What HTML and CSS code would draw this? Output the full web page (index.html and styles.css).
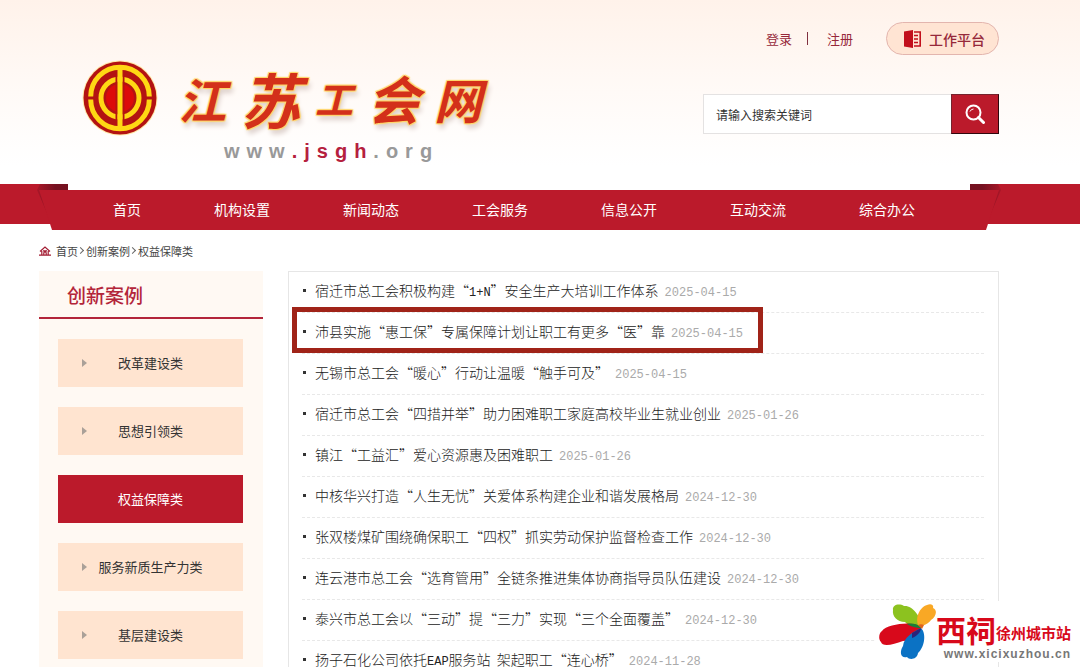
FILE: index.html
```html
<!DOCTYPE html>
<html lang="zh-CN">
<head>
<meta charset="utf-8">
<meta name="viewport" content="width=device-width, initial-scale=1">
<title>江苏工会网 - 权益保障类</title>
<link rel="stylesheet" href="styles.css">
</head>
<body>
<header class="header">
  <div class="wrap header-inner">
    <div class="brand">
      <svg class="emblem" viewBox="0 0 76 76" aria-hidden="true">
        <circle cx="38" cy="38" r="37.5" fill="#ffe9a8"/>
        <circle cx="38" cy="38" r="36.500" fill="#b31312"/>
        <g fill="none" stroke="#ffd814" stroke-width="5">
          <path d="M8.700 36.500A29.300 29.300 0 0 1 67.300 36.500M8.700 39.500A29.300 29.300 0 0 0 67.300 39.500"/>
          <circle cx="38" cy="38" r="19"/>
        </g>
        <circle cx="38" cy="38" r="14" fill="#dc0a0a"/>
        <path d="M34.500 11.500v53M41.500 11.500v53" stroke="#b31312" stroke-width="2"/>
        <path d="M38 7v62" stroke="#ffd814" stroke-width="5"/>
      </svg>
      <div class="brand-text">
        <h1 class="brand-name"><span>江</span><span class="big">苏</span><span class="small">工</span><span class="mid">会</span><span>网</span></h1>
        <p class="brand-url">www<b>.jsgh</b>.org</p>
      </div>
    </div>
    <div class="tools">
      <div class="account">
        <a href="#">登录</a><span class="bar"></span><a href="#">注册</a>
        <a class="platform" href="#">
          <svg class="door" viewBox="0 0 18 18" aria-hidden="true"><path fill="#c20f1c" d="M0 1.500L9 0v18L0 16.500z"/><path fill="none" stroke="#c20f1c" stroke-width="1.600" d="M10 2h6.200v14H10M10 5.500h4M10 9h4M10 12.500h4"/></svg>
          工作平台
        </a>
      </div>
      <form class="search">
        <input type="text" placeholder="请输入搜索关键词" aria-label="请输入搜索关键词">
        <button type="button" aria-label="搜索"><svg viewBox="0 0 20 20" aria-hidden="true"><circle cx="8.500" cy="8.500" r="7" fill="none" stroke="#fff" stroke-width="2"/><path d="M13.500 13.500l5 5" stroke="#fff" stroke-width="3" stroke-linecap="round"/><path d="M5 7.500a4 4 0 0 1 3.500-2.500" fill="none" stroke="#fff" stroke-width="1"/></svg></button>
      </form>
    </div>
  </div>
</header>
<div class="band">
  <div class="wrap">
    <div class="ribbon">
      <nav class="menu">
        <a href="#">首页</a><a href="#">机构设置</a><a href="#">新闻动态</a><a href="#">工会服务</a><a href="#">信息公开</a><a href="#">互动交流</a><a href="#">综合办公</a>
      </nav>
    </div>
  </div>
</div>
<div class="wrap crumbs">
  <svg class="home" viewBox="0 0 12 10" aria-hidden="true"><path fill="none" stroke="#a31d33" stroke-width="1.200" d="M1 5.500L6 1l5 4.500M2.800 5v4M9.200 5v4M0 9.200h12M4.800 9V7a1.200 1.200 0 0 1 2.400 0V9M4 4.800h4"/></svg>
  <a href="#">首页</a><span class="sep"></span><a href="#">创新案例</a><span class="sep"></span><a href="#">权益保障类</a>
</div>
<main class="wrap main">
  <aside class="side">
    <h2>创新案例</h2>
    <ul>
      <li><a href="#">改革建设类</a></li>
      <li><a href="#">思想引领类</a></li>
      <li><a class="active" href="#">权益保障类</a></li>
      <li><a href="#">服务新质生产力类</a></li>
      <li><a href="#">基层建设类</a></li>
    </ul>
  </aside>
  <section class="panel">
    <ul class="news">
      <li><a href="#">宿迁市总工会积极构建“<span class="half">1+N</span>”安全生产大培训工作体系</a><time>2025-04-15</time></li>
      <li class="marked"><a href="#">沛县实施“惠工保”专属保障计划让职工有更多“医”靠</a><time>2025-04-15</time></li>
      <li><a href="#">无锡市总工会“暖心”行动让温暖“触手可及”</a><time>2025-04-15</time></li>
      <li><a href="#">宿迁市总工会“四措并举”助力困难职工家庭高校毕业生就业创业</a><time>2025-01-26</time></li>
      <li><a href="#">镇江“工益汇”爱心资源惠及困难职工</a><time>2025-01-26</time></li>
      <li><a href="#">中核华兴打造“人生无忧”关爱体系构建企业和谐发展格局</a><time>2024-12-30</time></li>
      <li><a href="#">张双楼煤矿围绕确保职工“四权”抓实劳动保护监督检查工作</a><time>2024-12-30</time></li>
      <li><a href="#">连云港市总工会“选育管用”全链条推进集体协商指导员队伍建设</a><time>2024-12-30</time></li>
      <li><a href="#">泰兴市总工会以“三动”提“三力”实现“三个全面覆盖”</a><time>2024-12-30</time></li>
      <li><a href="#">扬子石化公司依托<span class="half">EAP</span>服务站&nbsp; 架起职工“连心桥”</a><time>2024-11-28</time></li>
    </ul>
  </section>
</main>
<div class="stamp">
  <svg class="petals" viewBox="0 0 58 57" aria-hidden="true">
    <path fill="#8cc21f" d="M14 7C13 2 20 0 25 3C33 2 42 13 43 25C36 25 30 23 26 19C18 19 13 13 14 7z"/>
    <path fill="#f9a825" d="M39 22C36 14 41 4 48 2C52 0 55 2 54 5C59 7 57 14 52 17C49 21 43 24 39 22z"/>
    <path fill="#d8091b" d="M3 28C8 21 33 18 40 23C45 30 33 38 24 38C14 42 3 44 2 39C-1 36 0 30 3 28z"/>
    <path fill="#0b72c4" d="M42 25C48 31 45 45 39 50C38 57 30 57 28 54C22 56 20 49 24 43C25 34 34 29 42 25z"/>
    <path fill="#17803a" d="M28 21C33 20 38 21 40 23L43 25C36 25 31 23 28 21z"/>
    <path fill="#2d2379" d="M33 30L42 25C42 29 38 33 33 35z"/>
    <path fill="#df641d" d="M39 22C41 21 43 21 45 22L43 26z"/>
  </svg>
  <div class="stamp-text">
    <p class="stamp-name"><b>西祠</b><span>徐州城市站</span></p>
    <p class="stamp-url">www.xicixuzhou.cn</p>
  </div>
</div>
</body>
</html>
```

FILE: styles.css
```css
*, *::before, *::after { box-sizing: border-box; }
body, h1, h2, p, ul { margin: 0; padding: 0; }
ul { list-style: none; }
a { color: inherit; text-decoration: none; }
body {
  font-family: "Noto Sans CJK SC", sans-serif;
  font-size: 14px;
  color: #333;
  background: #fff;
}
.wrap { padding: 0 81px 0 39px; }

.header { background: linear-gradient(#fff2ea, #fffaf7 50%, #fff 90%); }
.header-inner { display: flex; justify-content: space-between; min-height: 184px; }
.brand { display: flex; gap: 20px; padding: 60px 0 0 43px; }
.emblem { width: 76px; height: 76px; flex: none; }
.brand-text { width: 304px; }
.brand-name {
  display: flex;
  justify-content: space-between;
  align-items: center;
  height: 76px;
  font-size: 48px;
  line-height: 76px;
  font-weight: 700;
  font-style: italic;
  color: #d3301a;
  text-shadow: 1px 1px 1px #ffd56a, -1px -1px 1px #ffd56a, 1px -1px 1px #ffd56a, -1px 1px 1px #ffd56a, 2px 5px 5px #dccfca;
}
.brand-name .big { font-size: 60px; }
.brand-name .mid { font-size: 52px; }
.brand-name .small { font-size: 38px; }
.brand-url {
  padding-left: 46px;
  font: bold 20px/30px "Liberation Sans", sans-serif;
  letter-spacing: 7px;
  color: #999;
  white-space: nowrap;
}
.brand-url b { color: #b5203d; }

.tools { width: 296px; padding-top: 22px; }
.account { display: flex; align-items: center; justify-content: flex-end; font-size: 13px; color: #96283a; }
.bar { width: 1px; height: 13px; margin: 0 19px 0 15px; background: #803040; }
.platform {
  display: flex;
  align-items: center;
  gap: 7px;
  height: 33px;
  margin-left: 33px;
  padding: 0 13px 0 17px;
  border: 1px solid #e3b5ae;
  border-radius: 17px;
  background: #ffe4d3;
  font-size: 14px;
  font-weight: 500;
}
.door { width: 18px; height: 18px; }
.search { display: flex; height: 40px; margin-top: 39px; }
.search input {
  flex: 1;
  min-width: 0;
  padding: 0 12px;
  border: 1px solid #e4e2e2;
  border-right: 0;
  background: #fff;
  font: 12px "Noto Sans CJK SC", sans-serif;
}
.search input::placeholder { color: #333; opacity: 1; }
.search button {
  display: flex;
  align-items: center;
  justify-content: center;
  width: 48px;
  padding: 0;
  border: 1px solid;
  border-color: #76232d #30060c #30060c #76232d;
  background: #bb1a2b;
}
.search svg { width: 20px; height: 20px; }

.band { height: 40px; background: #bb1a2b; }
.ribbon {
  position: relative;
  padding-top: 6px;
  background: linear-gradient(#fff, #fff) center top / calc(100% - 58px) 6px no-repeat;
}
.ribbon::before, .ribbon::after {
  content: "";
  position: absolute;
  top: 0;
  width: 31px;
  height: 38px;
  background: linear-gradient(to right, #a81728, #751120 60%);
  clip-path: polygon(3px 0, 100% 0, 100% 6px, 14px 38px, 0 6px);
}
.ribbon::before { left: -2px; }
.ribbon::after { right: -2px; transform: scaleX(-1); }
.menu {
  position: relative;
  z-index: 1;
  display: flex;
  gap: 73px;
  padding: 0 74px;
  line-height: 39px;
  height: 40px;
  white-space: nowrap;
  color: #fff;
  background: #bb1a2b;
  clip-path: polygon(0 0, 100% 0, calc(100% - 13px) 100%, 13px 100%);
}

.crumbs { display: flex; align-items: center; height: 47px; padding-top: 6px; font-size: 11px; color: #444; }
.home { width: 12px; height: 10px; margin-right: 5px; }
.sep { width: 5px; height: 5px; margin: 0 3px 0 0; border: solid #666; border-width: 1px 1px 0 0; transform: rotate(45deg); }

.main { display: flex; gap: 25px; }
.side { width: 224px; flex: none; background: #fff9f3; }
.side h2 {
  height: 48px;
  padding-left: 28px;
  border-bottom: 2px solid #b3253a;
  font-size: 19px;
  line-height: 48px;
  font-weight: 500;
  color: #b3253a;
}
.side ul { display: flex; flex-direction: column; gap: 20px; padding: 20px 20px 20px 19px; }
.side li a {
  position: relative;
  display: block;
  background: #ffe4d0;
  font-size: 13px;
  line-height: 48px;
  text-align: center;
}
.side li a::before {
  content: "";
  position: absolute;
  left: 24px;
  top: 20px;
  border: solid transparent;
  border-width: 4px 0 4px 5px;
  border-left-color: #aaa098;
}
.side li .active { background: #bb1a2b; color: #fff; }
.side li .active::before { display: none; }

.panel { flex: 1; min-width: 0; padding: 0 14px 20px 13px; border: 1px solid #e6e6e6; }
.news li {
  position: relative;
  display: flex;
  align-items: baseline;
  gap: 6px;
  height: 41px;
  padding-left: 13px;
  border-bottom: 1px dashed #e8e8e8;
  line-height: 37px;
  white-space: nowrap;
}
.news li::before { content: ""; position: absolute; left: 1px; top: 17px; width: 3px; height: 3px; background: #333; }
.news a { font-weight: 300; color: #222; }
.half, .news time { font-family: "Liberation Mono", monospace; font-size: 12px; }
.news time { color: #aaa; }
.marked::after {
  content: "";
  position: absolute;
  left: -10px;
  top: -6px;
  width: 471px;
  height: 46px;
  border: 5px solid #a02318;
}

.stamp {
  position: fixed;
  right: 5px;
  bottom: 5px;
  display: flex;
  padding: 2px 4px 0 3px;
  background: #fff;
}
.petals { width: 58px; height: 57px; }
.stamp-text { width: 134px; padding-top: 11px; white-space: nowrap; }
.stamp-name { display: flex; align-items: flex-end; justify-content: flex-end; height: 30px; color: #d8091b; }
.stamp-name b { font-size: 30px; line-height: 30px; font-weight: 700; }
.stamp-name span { font-size: 15px; line-height: 22px; font-weight: 700; }
.stamp-url { padding-top: 3px; font: bold 12px/15px "Liberation Sans", sans-serif; letter-spacing: 1px; color: #777; text-align: right; }
```
